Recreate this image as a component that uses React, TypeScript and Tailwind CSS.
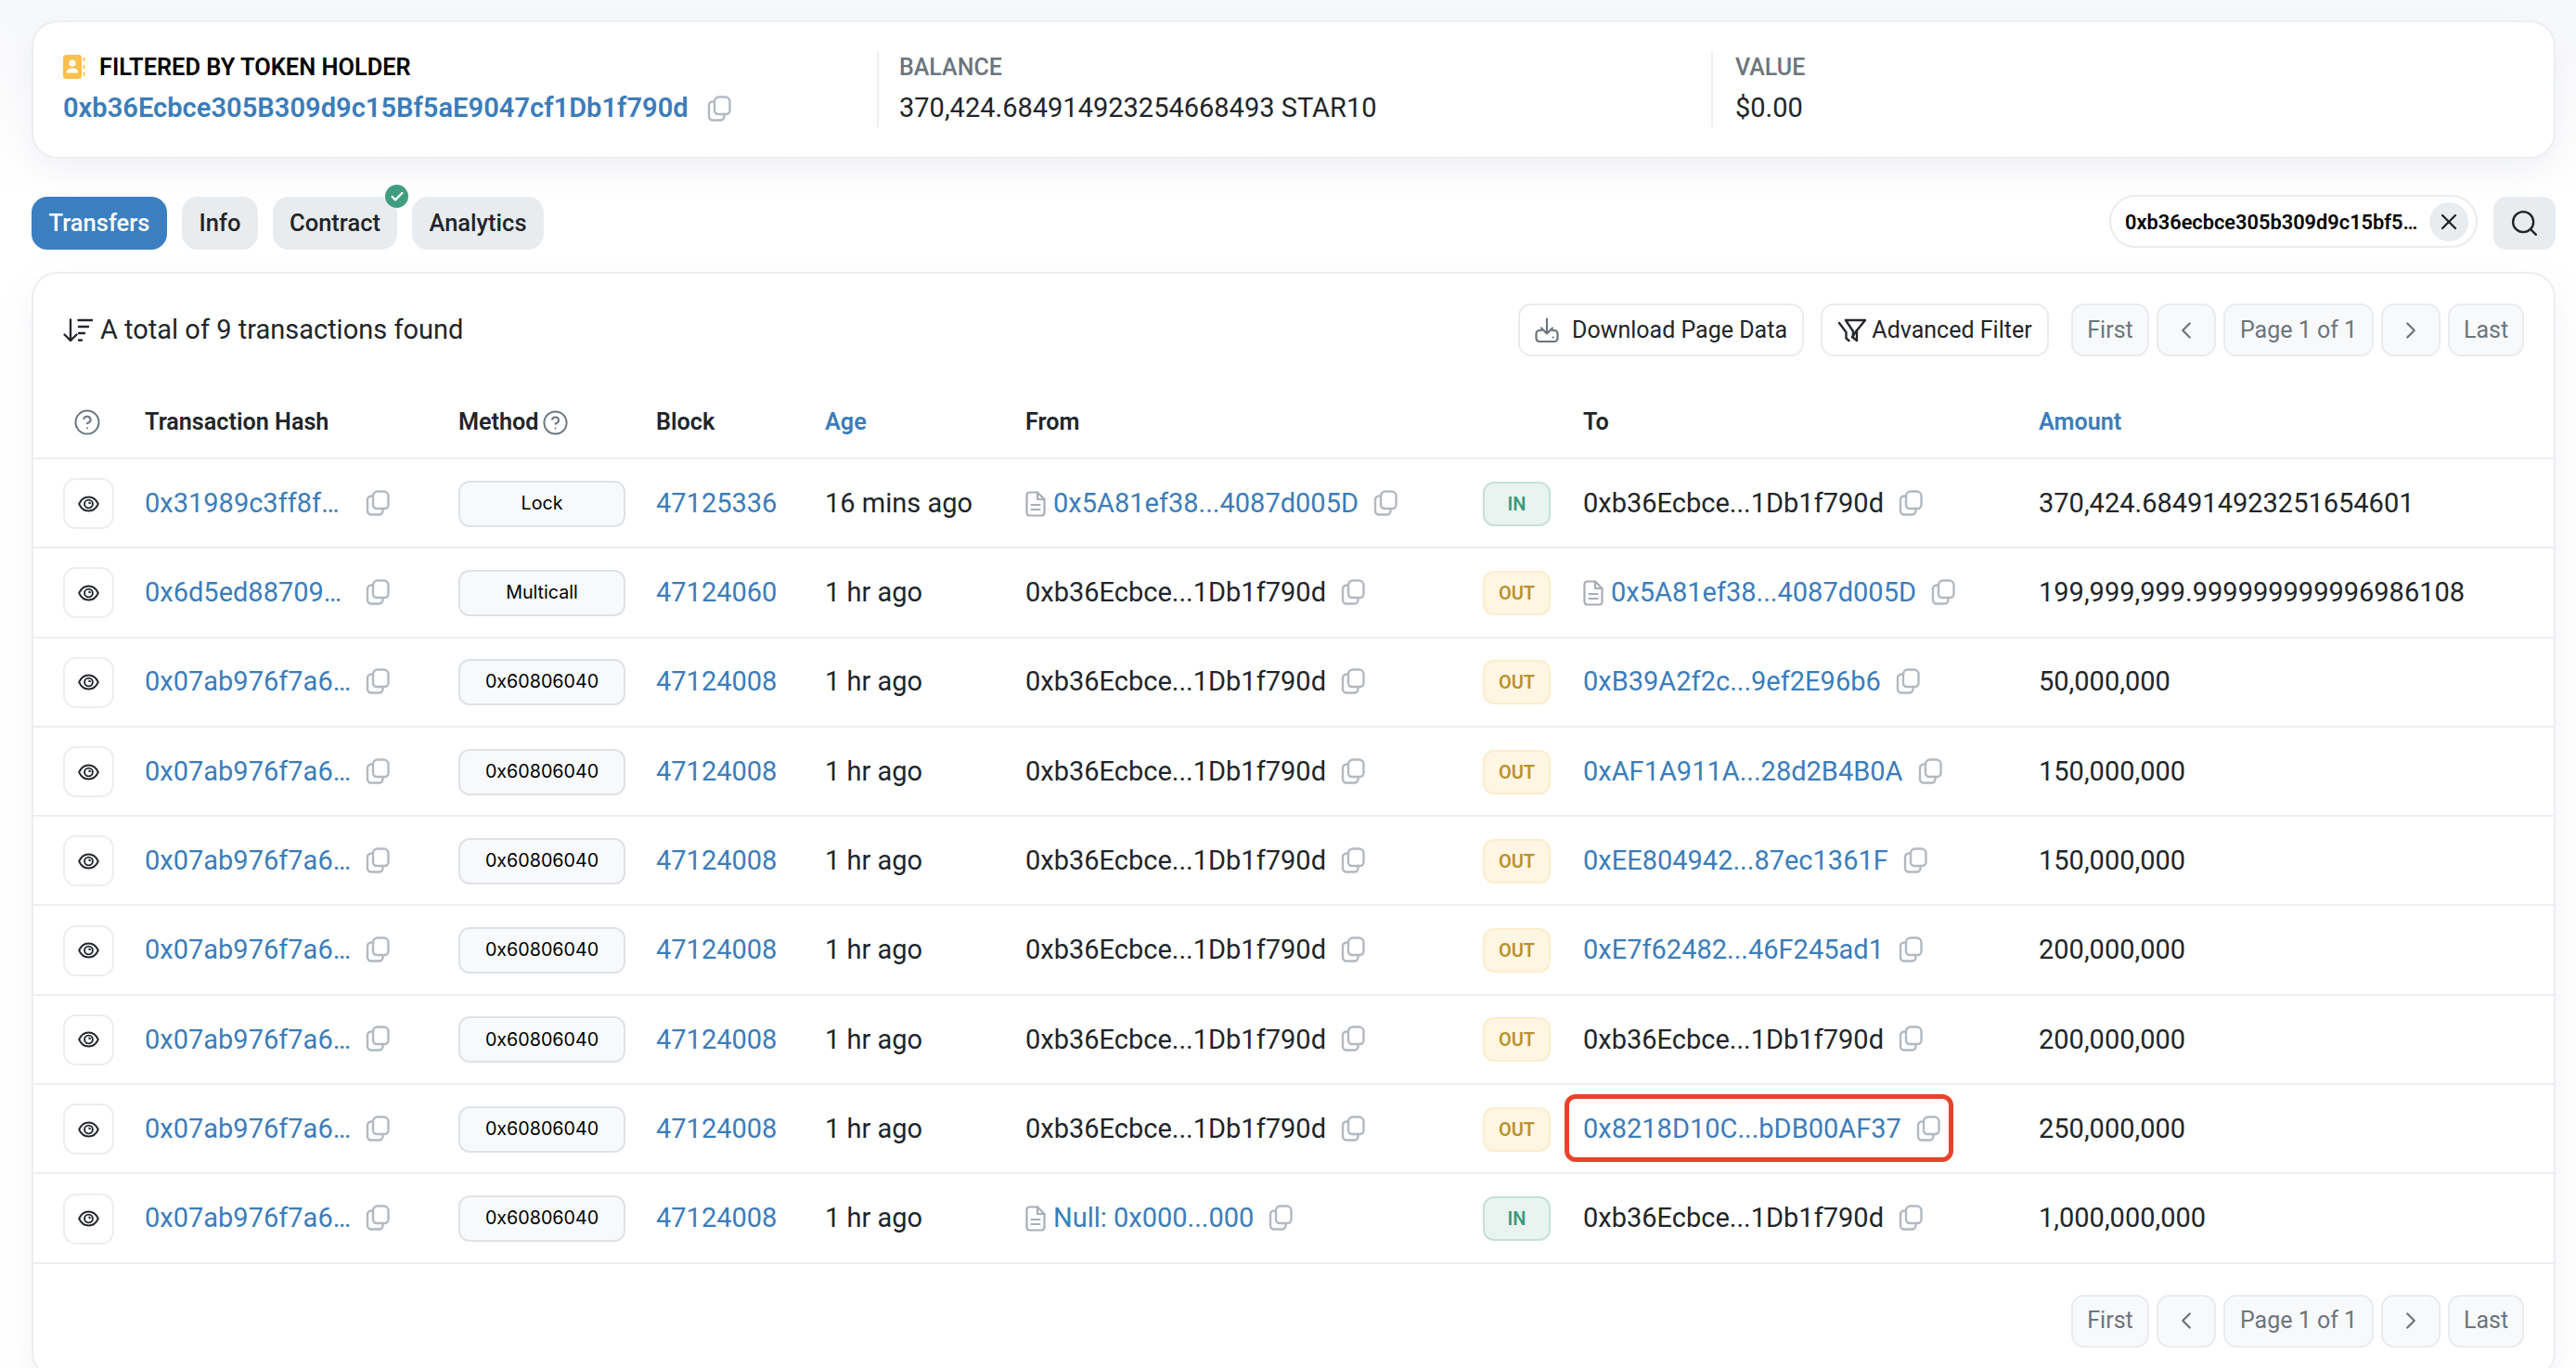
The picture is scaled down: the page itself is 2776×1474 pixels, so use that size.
import React from "react";
import { CircleHelp, Search, X, ChevronLeft, ChevronRight, Check } from "lucide-react";

const Copy = () => (
  <svg viewBox="0 0 26 28" className="w-[26px] h-[28px] shrink-0" fill="none" stroke="#b4b9bf" strokeWidth="2.4" strokeLinejoin="round" strokeLinecap="round">
    <path d="M13 1.500h6.500a5 5 0 0 1 5 4.600v9.900a4 4 0 0 1-4 4H12a4 4 0 0 1-4-4V6.500a5 5 0 0 1 5-5z" />
    <path d="M8 6.500H6a4 4 0 0 0-4 4v12a4 4 0 0 0 4 4h8.500a4 4 0 0 0 4-4V20" />
  </svg>
);

const FileIcon = () => (
  <svg viewBox="0 0 22 28" className="w-[22px] h-[28px] shrink-0" fill="none" stroke="#a9aeb5" strokeWidth="2.200" strokeLinejoin="round" strokeLinecap="round">
    <path d="M4.500 1.500H13l7.500 7.500v14.500a3 3 0 0 1-3 3h-13a3 3 0 0 1-3-3v-19a3 3 0 0 1 3-3z" />
    <path d="M13 1.500V9h7.500" />
    <path d="M6.500 15h9M6.500 20h9" />
  </svg>
);

const Eye = () => (
  <svg viewBox="0 0 24 18" className="w-[23px] h-[18px]" fill="none" stroke="#24272b" strokeWidth="2" strokeLinecap="round" strokeLinejoin="round">
    <path d="M1.200 9C3.500 4 7.300 1.200 12 1.200S20.500 4 22.800 9c-2.300 5-6.100 7.800-10.800 7.800S3.500 14 1.200 9z" />
    <circle cx="12" cy="9" r="4.600" />
    <path d="M12 9V6.400A2.600 2.600 0 0 1 14.600 9z" fill="#24272b" stroke="none" />
  </svg>
);

const linkC = "text-[#3b7dba]";
const darkC = "text-[#212529]";

type Row = {
  hash: string;
  method: string;
  block: string;
  age: string;
  from: string;
  fromLink?: boolean;
  fromFile?: boolean;
  dir: "IN" | "OUT";
  to: string;
  toLink?: boolean;
  toFile?: boolean;
  amount: string;
  mark?: boolean;
};

const me = "0xb36Ecbce...1Db1f790d";
const rows: Row[] = [
  { hash: "0x31989c3ff8f…", method: "Lock", block: "47125336", age: "16 mins ago", from: "0x5A81ef38...4087d005D", fromLink: true, fromFile: true, dir: "IN", to: me, amount: "370,424.684914923251654601" },
  { hash: "0x6d5ed88709…", method: "Multicall", block: "47124060", age: "1 hr ago", from: me, dir: "OUT", to: "0x5A81ef38...4087d005D", toLink: true, toFile: true, amount: "199,999,999.999999999996986108" },
  { hash: "0x07ab976f7a6…", method: "0x60806040", block: "47124008", age: "1 hr ago", from: me, dir: "OUT", to: "0xB39A2f2c...9ef2E96b6", toLink: true, amount: "50,000,000" },
  { hash: "0x07ab976f7a6…", method: "0x60806040", block: "47124008", age: "1 hr ago", from: me, dir: "OUT", to: "0xAF1A911A...28d2B4B0A", toLink: true, amount: "150,000,000" },
  { hash: "0x07ab976f7a6…", method: "0x60806040", block: "47124008", age: "1 hr ago", from: me, dir: "OUT", to: "0xEE804942...87ec1361F", toLink: true, amount: "150,000,000" },
  { hash: "0x07ab976f7a6…", method: "0x60806040", block: "47124008", age: "1 hr ago", from: me, dir: "OUT", to: "0xE7f62482...46F245ad1", toLink: true, amount: "200,000,000" },
  { hash: "0x07ab976f7a6…", method: "0x60806040", block: "47124008", age: "1 hr ago", from: me, dir: "OUT", to: me, amount: "200,000,000" },
  { hash: "0x07ab976f7a6…", method: "0x60806040", block: "47124008", age: "1 hr ago", from: me, dir: "OUT", to: "0x8218D10C...bDB00AF37", toLink: true, amount: "250,000,000", mark: true },
  { hash: "0x07ab976f7a6…", method: "0x60806040", block: "47124008", age: "1 hr ago", from: "Null: 0x000...000", fromLink: true, fromFile: true, dir: "IN", to: me, amount: "1,000,000,000" },
];

const Addr = ({ text, link, file }: { text: string; link?: boolean; file?: boolean }) => (
  <div className="flex items-center">
    {file && <span className="mr-[8px] flex"><FileIcon /></span>}
    <span className={link ? linkC : darkC}>{text}</span>
    <span className="ml-[16px] flex -translate-y-[1px]"><Copy /></span>
  </div>
);

const Pager = () => (
  <div className="flex items-center gap-[8px] text-[25px] text-[#6c757d]">
    <div className="w-[84px] h-[57px] flex items-center justify-center rounded-[14px] border-[2px] border-[#e9ecef] bg-[#f8f9fa]">First</div>
    <div className="w-[64px] h-[57px] flex items-center justify-center rounded-[14px] border-[2px] border-[#e9ecef] bg-[#f8f9fa]"><ChevronLeft size={30} strokeWidth={1.800} /></div>
    <div className="w-[162px] h-[57px] flex items-center justify-center rounded-[14px] border-[2px] border-[#e9ecef] bg-[#f8f9fa]">Page 1 of 1</div>
    <div className="w-[64px] h-[57px] flex items-center justify-center rounded-[14px] border-[2px] border-[#e9ecef] bg-[#f8f9fa]"><ChevronRight size={30} strokeWidth={1.800} /></div>
    <div className="w-[82px] h-[57px] flex items-center justify-center rounded-[14px] border-[2px] border-[#e9ecef] bg-[#f8f9fa]">Last</div>
  </div>
);

export default function App() {
  return (
    <div className="w-[2776px] h-[1474px] overflow-hidden bg-gradient-to-b from-[#f7f8fa] via-white via-[14%] to-white pl-[34px] pr-[22px] pt-[22px] font-['Roboto',sans-serif] text-[#212529] text-[29px]">
      {/* Holder summary */}
      <div className="h-[149px] rounded-[28px] border-[2px] border-[#eceef1] bg-white shadow-[0_14px_34px_rgba(189,197,209,0.2)] flex items-center">
        <div className="w-[909px] shrink-0 pl-[32px] flex flex-col gap-[9px] mb-[4px]">
          <div className="flex items-center h-[36px]">
            <svg viewBox="0 0 24 26" className="w-[24px] h-[26px]">
              <rect x="0" y="0" width="20" height="26" rx="3.500" fill="#f9c04d" />
              <circle cx="10" cy="9" r="3.600" fill="#fff" />
              <path d="M3.800 19.500c0-3.500 2.700-5 6.200-5s6.200 1.500 6.200 5z" fill="#fff" />
              <path d="M22.500 3v4M22.500 11v4M22.500 19v4" stroke="#f9c04d" strokeWidth="1.800" />
            </svg>
            <span className="ml-[15px] text-[25.400px] font-semibold text-black">FILTERED BY TOKEN HOLDER</span>
          </div>
          <div className="flex items-center h-[36px]">
            <span className={`text-[29.100px] font-semibold ${linkC}`}>0xb36Ecbce305B309d9c15Bf5aE9047cf1Db1f790d</span>
            <span className="ml-[20px] flex"><Copy /></span>
          </div>
        </div>
        <div className="w-[899px] shrink-0 h-[81px] border-l-[2px] border-[#eceef1] pl-[22px]">
          <div className="mt-[2px] h-[30px] flex items-center text-[25px] font-medium text-[#6c757d]">BALANCE</div>
          <div className="mt-[14px] h-[30px] flex items-center">370,424.684914923254668493 STAR10</div>
        </div>
        <div className="h-[81px] border-l-[2px] border-[#eceef1] pl-[24px]">
          <div className="mt-[2px] h-[30px] flex items-center text-[25px] font-medium text-[#6c757d]">VALUE</div>
          <div className="mt-[14px] h-[30px] flex items-center">$0.00</div>
        </div>
      </div>

      {/* Tabs */}
      <div className="mt-[41px] h-[59px] flex items-start">
        <div className="flex gap-[16px] text-[25.500px] font-medium">
          <div className="h-[57px] w-[146px] rounded-[17px] bg-[#3b7fc0] text-white flex items-center justify-center">Transfers</div>
          <div className="h-[57px] w-[82px] rounded-[17px] bg-[#e9ecef] flex items-center justify-center">Info</div>
          <div className="relative h-[57px] w-[134px] rounded-[17px] bg-[#e9ecef] flex items-center justify-center">
            Contract
            <span className="absolute -top-[13px] -right-[12px] w-[25px] h-[25px] rounded-full bg-[#3f9e7f] flex items-center justify-center text-white"><Check size={16} strokeWidth={3.500} /></span>
          </div>
          <div className="h-[57px] w-[142px] rounded-[17px] bg-[#e9ecef] flex items-center justify-center">Analytics</div>
        </div>
        <div className="ml-auto flex items-start gap-[17px]">
          <div className="w-[397px] h-[57px] rounded-full border-[2px] border-[#e9ecef] flex items-center pl-[15px] pr-[8px] -mt-[2px]">
            <span className="pt-[4px] text-[21.800px] font-semibold text-black">0xb36ecbce305b309d9c15bf5…</span>
            <span className="ml-auto w-[42px] h-[42px] rounded-full bg-[#e9ecef] flex items-center justify-center text-[#212529]"><X size={28} strokeWidth={2} /></span>
          </div>
          <div className="w-[67px] h-[57px] rounded-[14px] bg-[#e9ecef] flex items-center justify-center"><Search size={33} strokeWidth={1.700} /></div>
        </div>
      </div>

      {/* Transactions card */}
      <div className="mt-[22px] h-[1192px] rounded-[28px] border-[2px] border-[#eceef1] bg-white shadow-[0_14px_34px_rgba(189,197,209,0.2)]">
        <div className="h-[88px] pt-[32px] pl-[32px] pr-[32px] flex items-start">
          <div className="flex items-center h-[57px] text-[29px]">
            <svg viewBox="0 0 32 26" className="w-[32px] h-[26px]" fill="none" stroke="#24272b" strokeWidth="2.400" strokeLinecap="round" strokeLinejoin="round">
              <path d="M8 1.500V24M1.500 17.500L8 24l6.500-6.500" />
              <path d="M16.500 2h15M17 9h10M17 16h6M17 23.500h3" />
            </svg>
            <span className="ml-[8px]">A total of 9 transactions found</span>
          </div>
          <div className="ml-auto flex items-center">
            <div className="w-[308px] h-[57px] rounded-[14px] border-[2px] border-[#e9ecef] flex items-center justify-center text-[25px] mr-[18px]">
              <svg viewBox="0 0 26 28" className="w-[26px] h-[28px] mr-[14px]" fill="none" stroke="#6c757d" strokeWidth="2.200" strokeLinecap="round" strokeLinejoin="round">
                <path d="M13 1.500V17M7 11.500l6 6 6-6" />
                <path d="M7 14H5a3.500 3.500 0 0 0-3.500 3.500v5A3.500 3.500 0 0 0 5 26h16a3.500 3.500 0 0 0 3.500-3.500v-5A3.500 3.500 0 0 0 21 14h-2" />
                <path d="M19.500 21.500h.2" />
              </svg>
              Download Page Data
            </div>
            <div className="w-[246px] h-[57px] rounded-[14px] border-[2px] border-[#e9ecef] flex items-center justify-center text-[25px] mr-[24px]">
              <svg viewBox="0 0 32 26" className="w-[32px] h-[26px] mr-[5px]" fill="none" stroke="#24272b" strokeWidth="2.400" strokeLinecap="round" strokeLinejoin="round">
                <path d="M9 2h21L21 13v11l-5-4" />
                <path d="M9 2l8 12v6" />
                <path d="M2 5l7.500 10v6.500L12.500 24" />
                <path d="M21 13L16 20" />
              </svg>
              Advanced Filter
            </div>
            <Pager />
          </div>
        </div>

        {/* Head */}
        <div className="h-[112px] pt-[57px] border-b-[2px] border-[#eceef1] grid grid-cols-[120px_338px_213px_182px_216px_493px_108px_491px_1fr] items-start text-[25.200px] font-semibold">
          <div className="pl-[43px] h-[30px] flex items-center text-[#6c757d]"><CircleHelp size={30} strokeWidth={1.600} /></div>
          <div className="h-[30px] flex items-center">Transaction Hash</div>
          <div className="h-[30px] flex items-center">Method<span className="ml-[3px] text-[#6c757d] flex"><CircleHelp size={29} strokeWidth={1.600} /></span></div>
          <div className="h-[30px] flex items-center">Block</div>
          <div className={`h-[30px] flex items-center ${linkC}`}>Age</div>
          <div className="h-[30px] flex items-center">From</div>
          <div />
          <div className="h-[30px] flex items-center">To</div>
          <div className={`h-[30px] flex items-center ${linkC}`}>Amount</div>
        </div>

        {rows.map((r, i) => (
          <div key={i} className="h-[96.300px] pt-[1px] border-b-[2px] border-[#eceef1] grid grid-cols-[120px_338px_213px_182px_216px_493px_108px_491px_1fr] items-center">
            <div className="pl-[32px]">
              <div className="w-[55px] h-[55px] rounded-[14px] border-[2px] border-[#eceef1] flex items-center justify-center"><Eye /></div>
            </div>
            <div className="flex items-center">
              <span className={`w-[238px] ${linkC}`}>{r.hash}</span>
              <span className="flex -translate-y-[1px]"><Copy /></span>
            </div>
            <div>
              <div className="w-[180px] h-[50px] rounded-[12px] border-[2px] border-[#dfe2e6] bg-[#f8f9fa] flex items-center justify-center font-['Inter',sans-serif] text-[19.700px] text-black">{r.method}</div>
            </div>
            <div className={linkC}>{r.block}</div>
            <div>{r.age}</div>
            <Addr text={r.from} link={r.fromLink} file={r.fromFile} />
            <div>
              {r.dir === "IN" ? (
                <div className="w-[73px] h-[48px] rounded-[12px] border-[2px] border-[#c6e0d9] bg-[#e9f4f1] flex items-center justify-center text-[20px] font-semibold text-[#3d9a7c]">IN</div>
              ) : (
                <div className="w-[73px] h-[48px] rounded-[12px] border-[2px] border-[#fbedcd] bg-[#fef6e3] flex items-center justify-center text-[20px] font-semibold text-[#b9932f]">OUT</div>
              )}
            </div>
            <div className="relative">
              <Addr text={r.to} link={r.toLink} file={r.toFile} />
              {r.mark && <div className="absolute -left-[20px] -top-[16px] w-[419px] h-[73px] rounded-[12px] border-[5.500px] border-[#e8432a]" />}
            </div>
            <div>{r.amount}</div>
          </div>
        ))}

        <div className="mt-[33px] pr-[32px] flex justify-end"><Pager /></div>
      </div>
    </div>
  );
}
